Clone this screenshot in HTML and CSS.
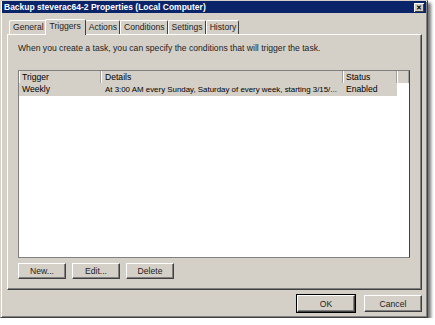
FILE: index.html
```html
<!DOCTYPE html>
<html lang="en">
<head>
    <meta charset="UTF-8">
    <title>Backup steverac64-2 Properties (Local Computer)</title>
    <link rel="stylesheet" href="styles.css">
</head>
<body>
    <div class="window">
        <!-- Title bar -->
        <div class="titlebar">
            <span class="title">Backup steverac64-2 Properties (Local Computer)</span>
            <span class="close">&#x2715;</span>
        </div>

        <div class="content">
            <!-- Tabs -->
            <div class="tabs">
                <div class="tab">General</div>
                <div class="tab active">Triggers</div>
                <div class="tab">Actions</div>
                <div class="tab">Conditions</div>
                <div class="tab">Settings</div>
                <div class="tab">History</div>
            </div>

            <div class="panel">
                <p class="intro">When you create a task, you can specify the conditions that will trigger the task.</p>

                <div class="list">
                    <div class="list-head">
                        <div class="col col-trigger">Trigger</div>
                        <div class="col col-details">Details</div>
                        <div class="col col-status">Status</div>
                        <div class="col col-rest"></div>
                    </div>
                    <div class="list-row selected">
                        <div class="col col-trigger">Weekly</div>
                        <div class="col col-details">At 3:00 AM every Sunday, Saturday of every week, starting 3/15/...</div>
                        <div class="col col-status">Enabled</div>
                    </div>
                </div>

                <div class="list-buttons">
                    <button class="btn">New...</button>
                    <button class="btn">Edit...</button>
                    <button class="btn">Delete</button>
                </div>
            </div>

            <div class="footer">
                <button class="btn btn-wide btn-default">OK</button>
                <button class="btn btn-wide">Cancel</button>
            </div>
        </div>
    </div>
</body>
</html>
```

FILE: styles.css
```css
body {
    margin: 0;
    background-color: #ffffff;
    font-family: "Liberation Sans", Arial, sans-serif;
    font-size: 8.6px;
    color: #000;
}
.window {
    width: 428px;
    height: 318px;
    box-sizing: border-box;
    background-color: #d4d0c8;
    border: 1px solid #404040;
    border-top-color: #d4d0c8;
    border-left-color: #d4d0c8;
    box-shadow: inset 1px 1px 0 #ffffff, inset -1px -1px 0 #808080, 3px 3px 3px rgba(0, 0, 0, 0.55);
    display: flex;
    flex-direction: column;
}
.titlebar {
    height: 12px;
    margin: 0 1px;
    background-color: #0a246a;
    color: #ffffff;
    font-weight: bold;
    font-size: 8.5px;
    display: flex;
    align-items: center;
    justify-content: space-between;
    padding-left: 2px;
}
.close {
    width: 10px;
    height: 9px;
    margin-right: 2px;
    background-color: #d4d0c8;
    color: #000;
    font-size: 7px;
    line-height: 9px;
    text-align: center;
    box-shadow: inset 1px 1px 0 #ffffff, inset -1px -1px 0 #404040;
}
.content {
    flex: 1;
    padding: 6px 5px 0 6px;
    display: flex;
    flex-direction: column;
}
.tabs {
    display: flex;
    align-items: flex-end;
    height: 15px;
    padding-left: 2px;
}
.tab {
    height: 13px;
    line-height: 13px;
    padding: 0 2px 0 3px;
    border-top: 1px solid #ffffff;
    border-left: 1px solid #ffffff;
    border-right: 1px solid #404040;
    border-top-left-radius: 2px;
    border-top-right-radius: 2px;
    color: #222;
}
.tab.active {
    height: 15px;
    line-height: 12px;
    margin: 0 -1px 0 -2px;
    padding: 0 4px;
    position: relative;
    top: 1px;
    background-color: #d4d0c8;
    z-index: 1;
}
.panel {
    height: 256px;
    box-sizing: border-box;
    border: 1px solid #404040;
    border-top-color: #ffffff;
    border-left-color: #ffffff;
    box-shadow: inset -1px -1px 0 #808080;
    padding: 0 10px 0 10px;
}
.intro {
    margin: 8px 0 0 0;
    color: #222;
}
.list {
    margin-top: 17px;
    height: 188px;
    width: 392px;
    box-sizing: border-box;
    background-color: #ffffff;
    border: 1px solid #808080;
    border-right-color: #404040;
}
.list-head {
    display: flex;
    height: 12px;
    line-height: 12px;
    background-color: #d4d0c8;
}
.list-head .col {
    border-right: 1px solid #a0a0a0;
    box-shadow: inset 1px 0 0 #ffffff;
}
.list-row {
    display: flex;
    height: 13px;
    line-height: 13px;
    width: 378px;
}
.list-row.selected {
    background-color: #d4d0c8;
}
.col {
    box-sizing: border-box;
    padding-left: 3px;
    white-space: nowrap;
    overflow: hidden;
}
.col-trigger {
    width: 82px;
}
.col-details {
    width: 242px;
    padding-left: 4px;
}
.list-row .col-details {
    font-size: 7.9px;
}
.col-status {
    width: 54px;
}
.col-rest {
    flex: 1;
}
.list-buttons {
    display: flex;
    gap: 6px;
    margin-top: 5px;
}
.btn {
    font-family: inherit;
    font-size: 8.6px;
    color: #222;
    width: 48px;
    height: 16px;
    padding: 0;
    background-color: #d4d0c8;
    border: 1px solid #404040;
    border-top-color: #ffffff;
    border-left-color: #ffffff;
    box-shadow: inset -1px -1px 0 #808080;
}
.footer {
    display: flex;
    justify-content: flex-end;
    gap: 9px;
    margin-top: 5px;
}
.btn-wide {
    width: 58px;
    height: 17px;
}
.btn-default {
    outline: 1px solid #000;
    outline-offset: 0;
}
```
